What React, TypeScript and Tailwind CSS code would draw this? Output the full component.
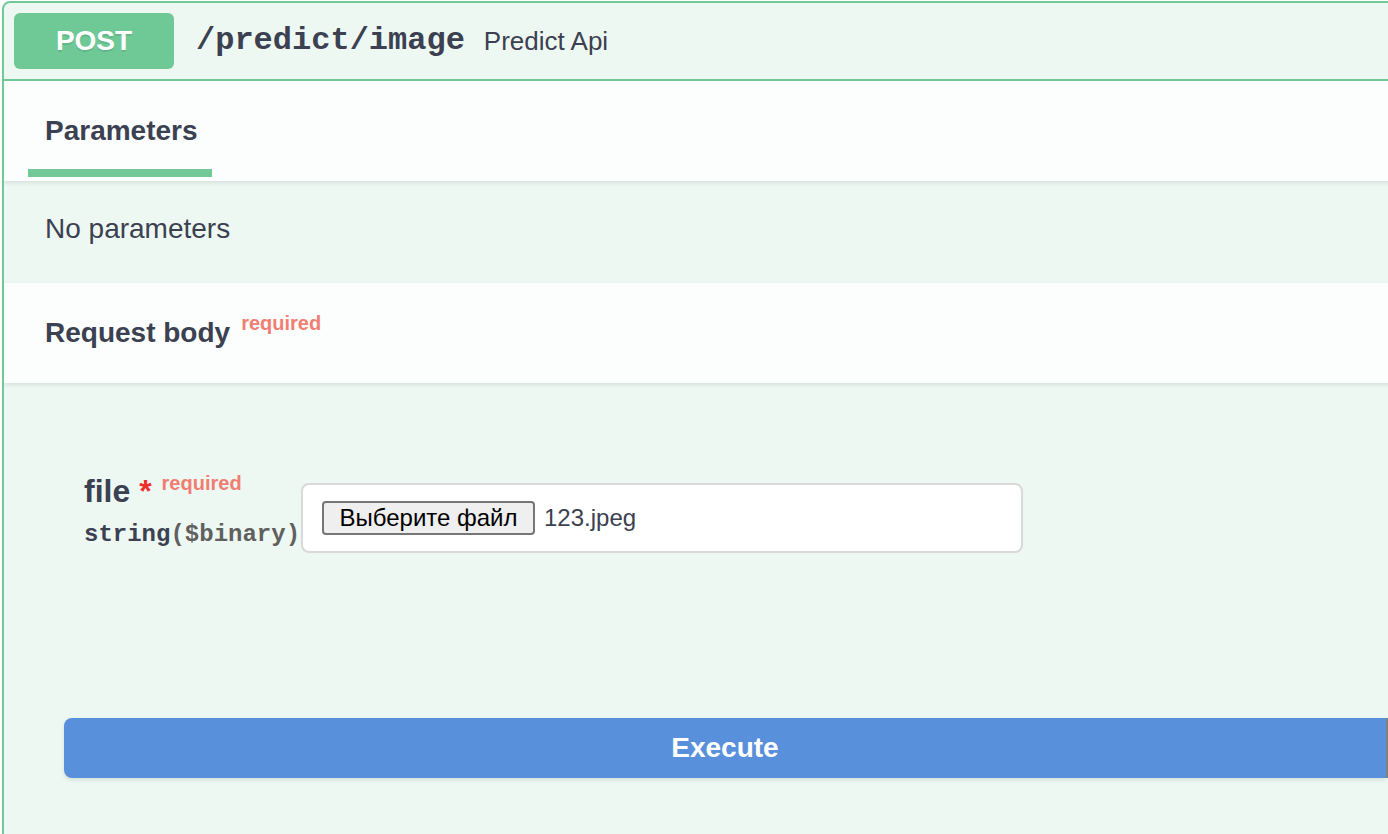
import React from "react";

const sans = { fontFamily: '"Liberation Sans", Arial, sans-serif' };

export default function App() {
  return (
    <div className="w-[1388px] h-[834px] overflow-hidden bg-white pl-[2px] pt-[1px]" style={sans}>
      <div className="w-[1480px] h-[900px] rounded-lg border-2 border-[#72c997] bg-[#eef8f2] text-[#3b4151] overflow-hidden">
        {/* Summary header */}
        <div className="flex items-center h-[78px] px-[10px] border-b-2 border-[#72c997]">
          <div className="w-[160px] h-[56px] rounded-md bg-[#6fc996] flex items-center justify-center text-white text-[28px] font-bold [text-shadow:0_2px_0_rgba(0,0,0,0.1)]">
            POST
          </div>
          <span className="ml-[22px] font-['Liberation_Mono',monospace] font-bold text-[32px] leading-none text-[#3b4151]">
            /predict/image
          </span>
          <span className="ml-[19px] text-[26px] leading-none text-[#3b4151]">Predict Api</span>
        </div>

        {/* Parameters tab */}
        <div className="relative z-10 h-[100px] bg-[#fcfefd] shadow-[0_2px_4px_rgba(0,0,0,0.1)] px-[24px]">
          <div className="w-[184px] pt-[34px] flex flex-col">
            <span className="pl-[17px] text-[28px] leading-[32px] font-bold">Parameters</span>
            <div className="mt-[22px] h-[8px] bg-[#72c997]" />
          </div>
        </div>

        <div className="h-[102px] pt-[32px] pl-[41px]">
          <p className="text-[28px] leading-[32px]">No parameters</p>
        </div>

        {/* Request body header */}
        <div className="relative z-10 h-[100px] bg-[#fcfefd] shadow-[0_2px_4px_rgba(0,0,0,0.1)] flex items-center pl-[41px]">
          <span className="text-[28px] leading-[32px] font-bold">Request body</span>
          <span className="relative -top-[10px] ml-[11px] text-[20px] font-bold text-[#f07e72]">required</span>
        </div>

        {/* Body */}
        <div className="pt-[90px] pl-[80px]">
          <div className="flex items-start">
            <div className="w-[217px]">
              <div className="flex items-start h-[36px]">
                <span className="text-[32px] leading-[36px] font-bold">
                  file<span className="text-[#f0302a]">&nbsp;*</span>
                </span>
                <span className="relative -top-[4px] ml-[10px] text-[20px] leading-[28px] font-bold text-[#f07e72]">
                  required
                </span>
              </div>
              <div className="mt-[12px] font-['Liberation_Mono',monospace] font-bold text-[24px] leading-[28px] whitespace-nowrap">
                <span className="text-[#3b4151]">string</span>
                <span className="text-[#606060]">($binary)</span>
              </div>
            </div>
            <div className="mt-[10px] w-[722px] h-[70px] rounded-lg border-2 border-[#d9d9d9] bg-white flex items-center pl-[19px]">
              <button className="w-[213px] h-[34px] rounded border-2 border-[#767676] bg-[#efefef] text-black text-[24px] leading-none">
                Выберите файл
              </button>
              <span className="ml-[9px] text-[24px] text-[#3b4151]">123.jpeg</span>
            </div>
          </div>

          <div className="mt-[165px] -ml-[20px] flex">
            <button className="w-[1322px] h-[60px] rounded-l-lg bg-[#5990dc] text-white text-[28px] font-bold shadow-[0_2px_4px_rgba(0,0,0,0.1)]">
              Execute
            </button>
            <div className="w-[2px] h-[60px] bg-[#808080]" />
          </div>
        </div>
      </div>
    </div>
  );
}
